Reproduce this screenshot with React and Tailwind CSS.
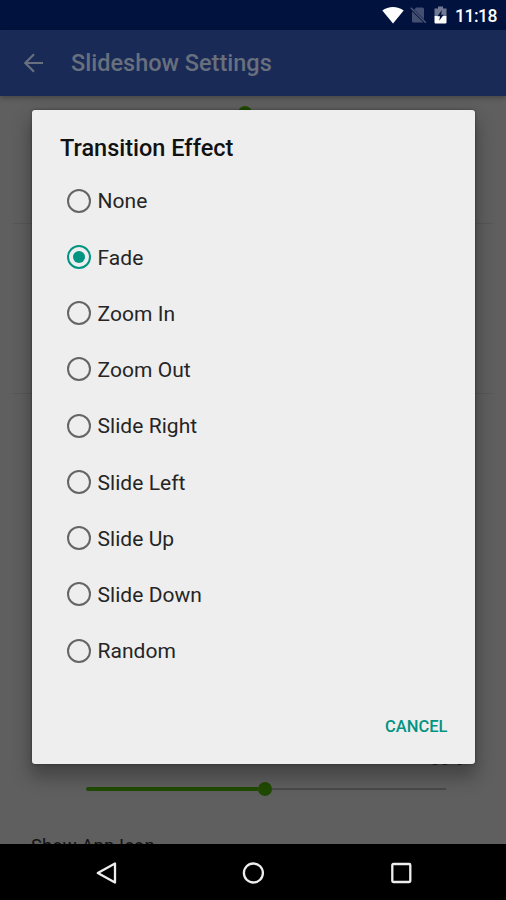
import React from "react";

const effects = [
  "None",
  "Fade",
  "Zoom In",
  "Zoom Out",
  "Slide Right",
  "Slide Left",
  "Slide Up",
  "Slide Down",
  "Random",
];

const StatusBar = () => (
  <div className="flex h-[30px] shrink-0 items-center justify-end bg-[#00123d] pr-[9px] text-white">
    {/* Wifi */}
    <svg width="22" height="18" viewBox="0 0 22 18" className="mr-[6px]">
      <path d="M0.3 4.6C6.3 -0.2 15.7 -0.2 21.7 4.6L11 17.4Z" fill="#fff" />
    </svg>
    {/* No SIM */}
    <svg width="17" height="18" viewBox="0 0 17 18" className="mr-[7px]">
      <path
        d="M6.2 1.5H12.5Q14 1.5 14 3V13.2L4.2 3.4ZM2 5.2L13.5 16.5H3.4Q2 16.5 2 15Z"
        fill="#434e70"
      />
      <path d="M0.8 1.8L15.8 16.8" stroke="#4f597a" strokeWidth="1.4" />
    </svg>
    {/* Battery charging */}
    <svg width="13" height="18" viewBox="0 0 13 18" className="mr-[8px]">
      <path d="M4 0.5H9V2.5H12.5V10H0.5V2.5H4Z" fill="#707991" />
      <path d="M0.5 10H12.5V16.5Q12.5 17.5 11.5 17.5H1.5Q0.5 17.5 0.5 16.5Z" fill="#fff" />
      <path d="M7.8 4L3.5 10.2H6L5.2 14.8L9.7 8.7H7.1Z" fill="#00123d" />
    </svg>
    <span className="pt-px text-[17.5px] leading-[30px] font-medium tracking-[-0.5px]">
      11:18
    </span>
  </div>
);

const AppBar = () => (
  <div className="flex h-[66px] shrink-0 items-center bg-[#1a2a57] pl-[23px] text-[#68707d] shadow-[0_2px_5px_rgba(0,0,0,0.28)]">
    <svg
      width="21"
      height="20"
      viewBox="0 0 21 20"
      fill="none"
      stroke="currentColor"
      strokeWidth="2.2"
    >
      <path d="M20 10H2.5M11 1.3L2.3 10L11 18.7" />
    </svg>
    <h1 className="ml-[27px] pt-[2px] text-[23.5px] font-medium">
      Slideshow Settings
    </h1>
  </div>
);

// Seek bar with its thumb at the middle of the track
const Slider = () => (
  <div className="flex h-4 items-center">
    <div className="h-[4px] w-[172px] rounded-l-sm bg-[#204a00]" />
    <div className="size-[14px] rounded-full bg-[#204a00]" />
    <div className="h-[2px] flex-1 bg-[#4a4a4a]" />
  </div>
);

const SettingsList = () => (
  <div className="h-[748px] overflow-hidden pt-[9px]">
    <div className="mx-[13px] h-[119px] border-b border-[#575757] pr-[48px] pl-[53px]">
      <Slider />
    </div>
    <div className="mx-[13px] h-[170px] border-b border-[#575757]" />
    <div className="flex h-[376px] items-end justify-end pr-[43px]">
      <span className="text-[18px] leading-[22px] text-[#222]">50%</span>
    </div>
    <div className="mt-[11px] pr-[60px] pl-[86px]">
      <Slider />
    </div>
    <div className="mt-[36px] pl-[31px] text-[18.4px] leading-[26px] tracking-[0.1px] text-[#111]">
      Show App Icon
    </div>
  </div>
);

const Radio = ({ checked }) => (
  <span
    className={`flex size-[24px] shrink-0 items-center justify-center rounded-full border-2 ${
      checked ? "border-[#009482]" : "border-[#656565]"
    }`}
  >
    {checked && <span className="size-[12px] rounded-full bg-[#009482]" />}
  </span>
);

const TransitionDialog = ({ selected }) => (
  <div className="absolute top-[110px] left-[32px] flex h-[654px] w-[443px] flex-col rounded-[3px] bg-[#eee] shadow-[0_11px_18px_2px_rgba(0,0,0,0.3),0_0_3px_rgba(0,0,0,0.4)]">
    <h2 className="h-[62.5px] pt-[22px] pl-[28px] text-[23.5px] leading-[32px] font-medium text-[#111]">
      Transition Effect
    </h2>
    <ul>
      {effects.map((effect) => (
        <li key={effect} className="flex h-[56.25px] items-center pl-[35px]">
          <Radio checked={effect === selected} />
          <span className="ml-[6.5px] pt-[3px] text-[21px] tracking-[0.05px] text-[#252525]">
            {effect}
          </span>
        </li>
      ))}
    </ul>
    <button className="mt-[34.5px] mr-[27.5px] self-end text-[16.5px] leading-[28px] font-medium text-[#009482]">
      CANCEL
    </button>
  </div>
);

const NavigationBar = () => (
  <div className="flex h-[56px] shrink-0 items-center justify-center gap-[124px] bg-black pt-px">
    <svg width="24" height="24" viewBox="0 0 24 24" fill="none" stroke="#eee" strokeWidth="2.3" strokeLinejoin="round">
      <path d="M22 2.5V21.5L4.8 12Z" />
    </svg>
    <svg width="24" height="24" viewBox="0 0 24 24" fill="none" stroke="#eee" strokeWidth="2.3">
      <circle cx="12.4" cy="12" r="9.5" />
    </svg>
    <svg width="24" height="24" viewBox="0 0 24 24" fill="none" stroke="#eee" strokeWidth="2.3">
      <rect x="3.3" y="3" width="18" height="18" rx="1" />
    </svg>
  </div>
);

const App = () => {
  return (
    <div className="relative flex h-[900px] w-[506px] flex-col overflow-hidden bg-[#5f5f5f] font-['Roboto',sans-serif]">
      <StatusBar />
      <AppBar />
      <SettingsList />
      <NavigationBar />
      <TransitionDialog selected="Fade" />
    </div>
  );
};

export default App;
